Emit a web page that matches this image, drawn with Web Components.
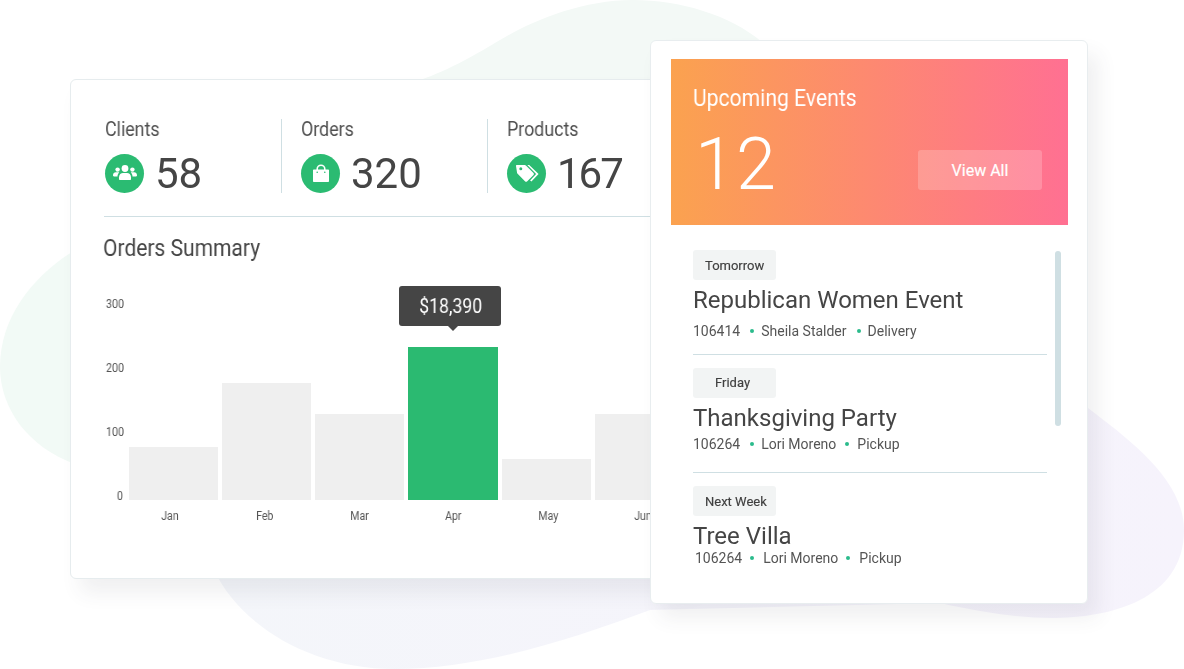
<!DOCTYPE html>
<html><head><meta charset="utf-8"><style>
html,body{margin:0;background:#fff}
body{width:1184px;height:669px;overflow:hidden;position:relative;font-family:Roboto,sans-serif;color:#454545}
</style></head><body>
<blob-bg></blob-bg>
<dash-card>
  <stat-item label="Clients" value="58" icon="users"></stat-item>
  <stat-item label="Orders" value="320" icon="bag"></stat-item>
  <stat-item label="Products" value="167" icon="tag"></stat-item>
</dash-card>
<events-card>
  <event-item tag="Tomorrow" title="Republican Women Event" a="106414" b="Sheila Stalder" c="Delivery"></event-item>
  <event-item tag="Friday" title="Thanksgiving Party" a="106264" b="Lori Moreno" c="Pickup"></event-item>
  <event-item tag="Next Week" title="Tree Villa" a="106264" b="Lori Moreno" c="Pickup"></event-item>
</events-card>
<script>
class BlobBg extends HTMLElement{constructor(){super();this.attachShadow({mode:'open'}).innerHTML=`<style>:host{position:absolute;inset:0;display:block}svg{display:block}</style>
<svg width="1184" height="669" viewBox="0 0 1184 669">
<defs><linearGradient id="lv" x1="0" x2="1" y1="0" y2="0"><stop offset="0" stop-color="#f4f6fa"/><stop offset="1" stop-color="#f6f3fc"/></linearGradient></defs>
<path fill="#f3f9f6" d="M420 80C450 70 480 52 500 40C530 22 580 0 633 0C680 0 730 15 762 42L762 120L420 120Z"/>
<path fill="#f2faf6" d="M75 250C35 275 0 315 0 367C0 410 30 448 75 464Z"/>
<path fill="url(#lv)" d="M214 570C240 625 310 669 395 669C480 669 570 640 650 610L940 603C985 613 1020 618 1051 618C1110 618 1184 600 1184 530C1184 480 1130 440 1088 408L1000 400L214 400Z"/>
</svg>`}}
customElements.define('blob-bg',BlobBg);

class DashCard extends HTMLElement{constructor(){super();this.attachShadow({mode:'open'}).innerHTML=`<style>
:host{position:absolute;left:70px;top:79px;width:620px;height:500px;box-sizing:border-box;display:block;background:#fff;border:1px solid #e6ecee;border-radius:6px;box-shadow:10px 14px 20px rgba(60,60,80,.08);padding:39px 0 0 33px}
.clip{overflow:hidden;margin:-39px 0 0 -33px;padding:39px 0 0 33px;height:498px;box-sizing:border-box;border-radius:6px}
.stats{display:flex;width:546px;height:98px;border-bottom:1px solid #cfdfe3;box-sizing:border-box}
.title{font-size:24px;line-height:28px;margin:17px 0 0 -1px;transform-origin:0 0;white-space:nowrap;transform:scaleX(.875);color:#454545;will-change:transform}
</style>
<div class="clip"><div class="stats"><slot></slot></div>
<div class="title">Orders Summary</div>
<bar-chart></bar-chart></div>`}}
customElements.define('dash-card',DashCard);

const icons={
users:`<circle cx="12" cy="7.5" r="3.4"/><circle cx="4.6" cy="8.6" r="2.2"/><circle cx="19.4" cy="8.6" r="2.2"/><path d="M6 18.2v-2c0-2.6 2-4.2 4-4.2h4c2 0 4 1.6 4 4.2v2c0 .5-.5.8-1 .8H7c-.5 0-1-.3-1-.8z"/><path d="M0 14.2c0-1.9 1.3-2.9 2.8-2.9h2.8c.3 0 .5.1.6.2-1 .9-1.7 2.3-1.7 3.9H1c-.6 0-1-.4-1-1.2zM24 14.2c0-1.9-1.3-2.9-2.8-2.9h-2.8c-.3 0-.5.1-.6.2 1 .9 1.7 2.3 1.7 3.9H23c.6 0 1-.4 1-1.2z"/>`,
bag:`<path fill-rule="evenodd" d="M5 8.5h2.4V8a4.6 4.6 0 0 1 9.2 0v.5H19c.6 0 1 .4 1 1V20c0 .6-.4 1-1 1H5c-.6 0-1-.4-1-1V9.5c0-.6.4-1 1-1zM9 8.5h6V8a3 3 0 0 0-6 0zM8.2 10.5a.8.8 0 1 0 0 1.6.8.8 0 0 0 0-1.6zM15.8 10.5a.8.8 0 1 0 0 1.6.8.8 0 0 0 0-1.6z"/>`,
tag:`<path fill-rule="evenodd" d="M1.5 4h8.2c.5 0 .9.2 1.2.5l7.6 7.6c.5.5.5 1.3 0 1.8l-6.5 6.5c-.5.5-1.3.5-1.8 0L2.6 12.8c-.3-.3-.6-.8-.6-1.2L1 5c0-.6.2-1 .5-1zM5.800 6.300a1.500 1.500 0 1 0 0 3 1.500 1.500 0 0 0 0-3z"/><path d="M12.300 4h1.900l9.400 9-7.200 7.600-1.300-1.200 6-6.400z"/>`};
class StatItem extends HTMLElement{constructor(){super();const ic=this.getAttribute('icon');const w={users:178,bag:206,tag:150}[ic];
const first=ic==='users',last=ic==='tag';
this.attachShadow({mode:'open'}).innerHTML=`<style>
:host{display:block;width:${w}px;height:74px;box-sizing:border-box;padding-left:${first?1:19}px;${last?'':'border-right:1px solid #cfdfe3;'}flex:none}
.l{font-size:20px;line-height:20px;height:20px;color:#4f4f4f;transform-origin:0 0;transform:scaleX(.89);white-space:nowrap;will-change:transform}
.r{display:flex;align-items:center;margin-top:14px;gap:11px}
.c{width:39px;height:39px;border-radius:50%;background:#2bbb72;display:flex;align-items:center;justify-content:center;flex:none}
svg{width:24px;height:24px;fill:#fff}
.v{font-size:42px;line-height:40px;color:#454545;padding-top:1px;margin-bottom:-1px;will-change:transform;${last?'letter-spacing:-2px;':''}}
</style><div class="l">${this.getAttribute('label')}</div><div class="r"><div class="c"><svg viewBox="0 0 24 24">${icons[ic]}</svg></div><div class="v">${this.getAttribute('value')}</div></div>`}}
customElements.define('stat-item',StatItem);

class BarChart extends HTMLElement{constructor(){super();
const bars=[['Jan',53],['Feb',117],['Mar',86],['Apr',153,1],['May',41],['Jun',86]];
this.attachShadow({mode:'open'}).innerHTML=`<style>
:host{display:block;position:relative;margin-top:24px;height:240px}
.plot{display:flex;position:absolute;left:24.8px;top:0;height:214px;gap:4px;align-items:flex-end;width:600px}
.col{width:89.2px;flex:none;background:#efefef}
.g{background:#2bba71}
.y{position:absolute;left:0;width:19px;text-align:right;font-size:12px;line-height:14px;color:#555;transform-origin:100% 50%;transform:scaleX(.9);will-change:transform}
.x{position:absolute;left:20.9px;top:223px;display:flex;gap:4.4px}
.x span{width:90.2px;flex:none;text-align:center;font-size:12px;line-height:14px;color:#555}
.x span b{font-weight:400;display:inline-block;transform:scaleX(.88);will-change:transform}
.tip{position:absolute;left:295px;top:0;width:102px;height:40px;background:#454545;border-radius:3px;color:#fff;font-size:20px;line-height:40px;text-align:center}
.tip b{font-weight:400;display:inline-block;transform:scaleX(.88);will-change:transform;padding-left:1px}
.tip:after{content:"";position:absolute;left:49px;top:40px;border:5.5px solid transparent;border-top-color:#454545;border-bottom:0}
</style>
<div class="y" style="top:11px">300</div><div class="y" style="top:75px">200</div><div class="y" style="top:139px">100</div><div class="y" style="top:203px">0</div>
<div class="plot">${bars.map(b=>`<div class="col ${b[2]?'g':''}" style="height:${b[1]}px"></div>`).join('')}</div>
<div class="x">${bars.map(b=>`<span><b>${b[0]}</b></span>`).join('')}</div>
<div class="tip"><b>$18,390</b></div>`}}
customElements.define('bar-chart',BarChart);

class EventsCard extends HTMLElement{constructor(){super();this.attachShadow({mode:'open'}).innerHTML=`<style>
:host{position:absolute;left:650px;top:40px;width:438px;height:564px;box-sizing:border-box;display:block;background:#fff;border:1px solid #e8edef;border-radius:6px;box-shadow:10px 14px 20px rgba(60,60,80,.08);padding:18px 20px 0 20px}
.hero{height:166px;width:397px;background:linear-gradient(90deg,#fba24f,#ff7092);color:#fff;box-sizing:border-box;padding:25px 26px 0 22px}
.ht{font-size:24px;line-height:28px;font-weight:400;transform-origin:0 0;transform:scaleX(.88);white-space:nowrap;will-change:transform}
.hr{display:flex;justify-content:space-between;align-items:flex-start;margin-top:11px}
.n{font-size:72px;line-height:84px;font-weight:300;letter-spacing:1px;margin-left:2px;will-change:transform}
.btn{width:124px;height:40px;border-radius:3px;background:rgba(255,255,255,.2);text-align:center;line-height:41px;font-size:16px;font-weight:400;margin-top:27px;-webkit-text-stroke:.2px #fff}
.list{padding:25px 0 0 22px;width:354px;position:relative}
.sb{position:absolute;left:384px;top:26px;width:6px;height:175px;border-radius:3px;background:#cfdfe3}
</style><div class="hero"><div class="ht">Upcoming Events</div><div class="hr"><div class="n">12</div><div class="btn">View All</div></div></div>
<div class="list"><slot></slot><div class="sb"></div></div>`}}
customElements.define('events-card',EventsCard);

const cfg={
 Tomorrow:{pl:12,lh:31,h:105,top:0,tm:6,mt:9,dx:0,g:[10,7,10,7]},
 Friday:{pl:22,lh:30,h:105,top:13,tm:6,mt:4,dx:0,g:[10,7,9,8]},
 'Next Week':{pl:12,lh:31,h:110,top:13,tm:6,mt:0,dx:2,g:[8,9,8,9]}};
class EventItem extends HTMLElement{constructor(){super();const t=this.getAttribute('tag'),c=cfg[t];
this.attachShadow({mode:'open'}).innerHTML=`<style>
:host{display:block;box-sizing:border-box;height:${c.h}px;margin-top:${c.top}px;${t==='Next Week'?'':'border-bottom:1px solid #cfdfe3;'}}
.tag{width:83px;height:30px;box-sizing:border-box;background:#f2f4f4;border-radius:3px;font-size:13px;line-height:${c.lh}px;font-weight:400;color:#404040;padding-left:${c.pl}px;will-change:transform;-webkit-text-stroke:.15px #404040}
.t{font-size:24px;line-height:28px;color:#454545;margin-top:${c.tm}px;will-change:transform}
.m{font-size:14px;line-height:16px;color:#555;display:flex;align-items:center;margin-top:${c.mt}px;padding-left:${c.dx}px;white-space:nowrap;will-change:transform}
i{width:4px;height:4px;border-radius:50%;background:#2bbb8c;display:block}
</style><div class="tag">${t}</div><div class="t">${this.getAttribute('title')}</div><div class="m"><span>${this.getAttribute('a')}</span><i style="margin:0 ${c.g[1]}px 0 ${c.g[0]}px"></i><span>${this.getAttribute('b')}</span><i style="margin:0 ${c.g[3]}px 0 ${c.g[2]}px"></i><span>${this.getAttribute('c')}</span></div>`}}
customElements.define('event-item',EventItem);
</script>
</body></html>
